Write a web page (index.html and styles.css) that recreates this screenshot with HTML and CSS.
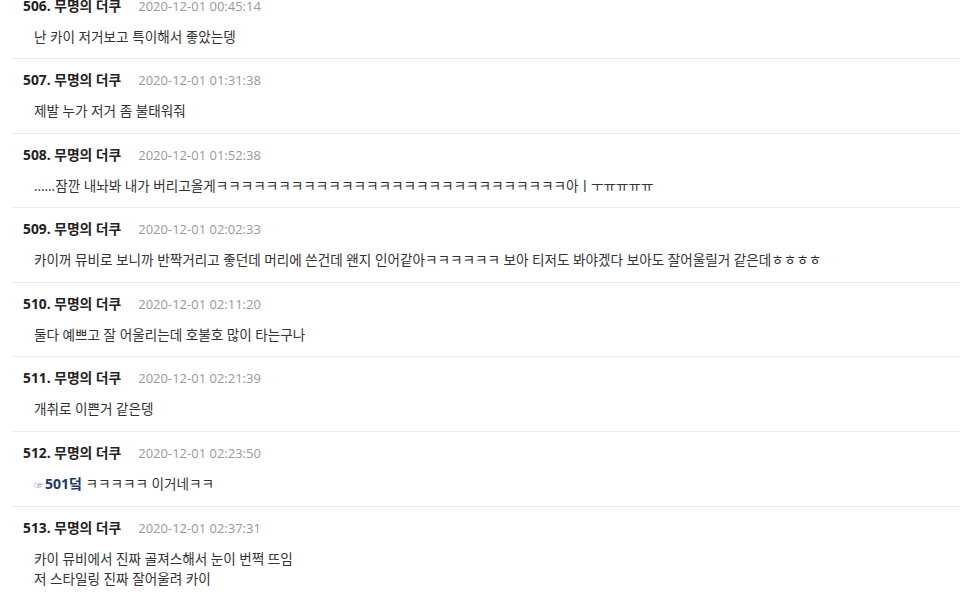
FILE: index.html
```html
<!DOCTYPE html>
<html lang="ko">
<head>
<meta charset="utf-8">
<title>댓글</title>
<link rel="stylesheet" href="styles.css">
</head>
<body>
<ul class="comments">
  <li class="comment">
    <div class="meta"><span class="name">506. 무명의 더쿠</span><span class="date">2020-12-01 00:45:14</span></div>
    <div class="body">난 카이 저거보고 특이해서 좋았는뎅</div>
  </li>
  <li class="comment">
    <div class="meta"><span class="name">507. 무명의 더쿠</span><span class="date">2020-12-01 01:31:38</span></div>
    <div class="body">제발 누가 저거 좀 불태워줘</div>
  </li>
  <li class="comment">
    <div class="meta"><span class="name">508. 무명의 더쿠</span><span class="date">2020-12-01 01:52:38</span></div>
    <div class="body">……잠깐 내놔봐 내가 버리고올게ㅋㅋㅋㅋㅋㅋㅋㅋㅋㅋㅋㅋㅋㅋㅋㅋㅋㅋㅋㅋㅋㅋㅋㅋㅋㅋㅋㅋ아ㅣㅜㅠㅠㅠㅠ</div>
  </li>
  <li class="comment">
    <div class="meta"><span class="name">509. 무명의 더쿠</span><span class="date">2020-12-01 02:02:33</span></div>
    <div class="body">카이꺼 뮤비로 보니까 반짝거리고 좋던데 머리에 쓴건데 왠지 인어같아ㅋㅋㅋㅋㅋㅋ 보아 티저도 봐야겠다 보아도 잘어울릴거 같은데ㅎㅎㅎㅎ</div>
  </li>
  <li class="comment">
    <div class="meta"><span class="name">510. 무명의 더쿠</span><span class="date">2020-12-01 02:11:20</span></div>
    <div class="body">둘다 예쁘고 잘 어울리는데 호불호 많이 타는구나</div>
  </li>
  <li class="comment">
    <div class="meta"><span class="name">511. 무명의 더쿠</span><span class="date">2020-12-01 02:21:39</span></div>
    <div class="body">개취로 이쁜거 같은뎅</div>
  </li>
  <li class="comment">
    <div class="meta"><span class="name">512. 무명의 더쿠</span><span class="date">2020-12-01 02:23:50</span></div>
    <div class="body"><a class="reply-ref"><span class="hand">☞</span>501덬</a> ㅋㅋㅋㅋㅋ 이거네ㅋㅋ</div>
  </li>
  <li class="comment">
    <div class="meta"><span class="name">513. 무명의 더쿠</span><span class="date">2020-12-01 02:37:31</span></div>
    <div class="body">카이 뮤비에서 진짜 골져스해서 눈이 번쩍 뜨임<br>저 스타일링 진짜 잘어울려 카이</div>
  </li>
</ul>
</body>
</html>
```

FILE: styles.css
```css
html, body {
  margin: 0;
  padding: 0;
  background: #ffffff;
}

body {
  font-family: "Open Sans", "Noto Sans CJK KR", sans-serif;
  font-size: 13px;
  color: #333333;
  overflow: hidden;
}

.comments {
  list-style: none;
  margin: -15.5px 0 0 12px;
  padding: 0;
}

.comment {
  padding: 11px 0 11.5px 11px;
  border-bottom: 1px solid #ebebeb;
}

.meta {
  display: flex;
  align-items: center;
  line-height: 20px;
}

.name {
  font-weight: 700;
  font-size: 13.8px;
  color: #222222;
}

.date {
  margin-left: 17px;
  font-size: 13px;
  color: #999999;
}

.body {
  margin-top: 11px;
  padding-left: 11px;
  font-size: 13.6px;
  line-height: 20px;
  color: #333333;
}

.reply-ref {
  color: #1b3b6f;
  font-weight: 700;
  font-size: 14px;
}

.hand {
  font-weight: 400;
  font-size: 10px;
  color: #8a93a6;
  margin-right: 1px;
}
```
